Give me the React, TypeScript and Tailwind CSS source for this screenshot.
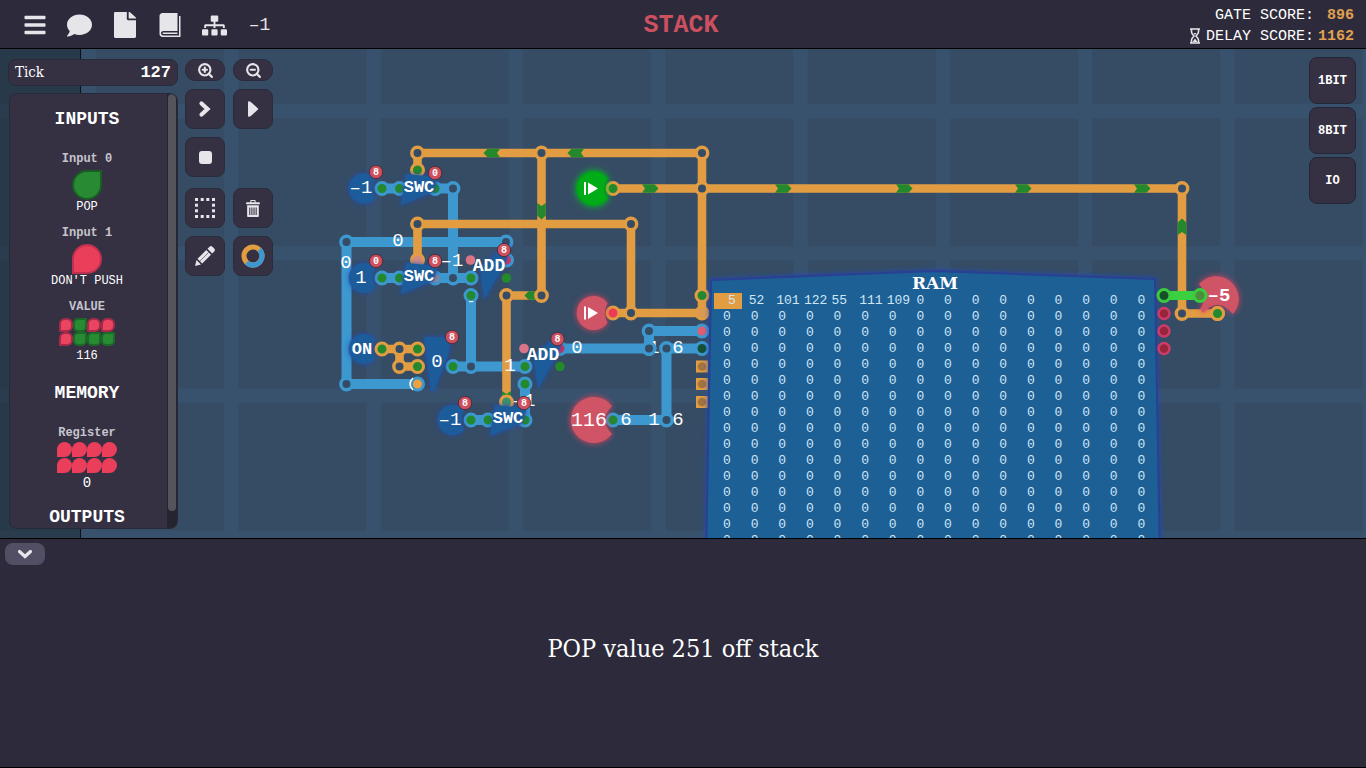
import React from "react";
import { FaBars, FaComment, FaFile, FaSitemap } from "react-icons/fa";
import { ImBook, ImBin } from "react-icons/im";
import { ZoomIn, ZoomOut } from "lucide-react";

const ORANGE = "#e29d43";
const BLUE = "#3c98cf";
const BOARD = "#354c64";
const GREEN = "#24882d";

type Point = [number, number];

const orangeWires = [
  "M417.5 170V153H702V313",
  "M541.5 153V295.5H506.5V402",
  "M613 188.5H1182V313.5H1217",
  "M417.5 260V224H631V313",
  "M613 313H702",
  "M382 349H417.5",
  "M399.5 349V366.5H417.5",
];

const blueWires = [
  "M382 188.5H453V278",
  "M382 278H471",
  "M506 242H346.5V384H417.5",
  "M471 295.5V366.5",
  "M453 366.5H525",
  "M525 384V420",
  "M471 420H490",
  "M560 348.5H649V331H702",
  "M613 420H666.5V348.5H702",
];

const orangeJoints: Point[] = [
  [417.5, 153], [541.5, 153], [702, 153], [702, 188.5], [1182, 188.5], [417.5, 224],
  [631, 224], [631, 313], [541.5, 295.5], [506.5, 295.5], [1182, 313.5], [399.5, 349], [399.5, 366.5],
];

const blueJoints: Point[] = [
  [453, 188.5], [453, 278], [346.5, 242], [506, 242], [346.5, 384], [471, 366.5],
  [649, 331], [649, 348.5], [666.5, 348.5], [666.5, 420],
];

const orangePins: [number, number, string][] = [
  [613, 188.5, GREEN], [702, 295.5, GREEN], [613, 313, "#ec3b57"],
  [702, 313, "#d89a55"], [382, 349, GREEN], [417.5, 349, GREEN], [417.5, 366.5, GREEN],
  [1217.5, 313.5, GREEN],
];

const coveredPins: [number, number, string][] = [
  [417.5, 170, GREEN], [506.5, 402, "#3f8f6a"], [417.5, 260, "#d68a86"],
];

const bluePins: [number, number, string][] = [
  [382, 188.5, GREEN], [399.5, 188.5, GREEN], [435, 188.5, GREEN], [382, 278, GREEN],
  [399.5, 278, GREEN], [435, 278, "#8f8795"], [471, 278, GREEN], [471, 295.5, GREEN],
  [453, 366.5, GREEN], [525, 366.5, GREEN], [525, 384, GREEN], [525, 420, GREEN],
  [471, 420, GREEN], [488, 420, GREEN], [613, 420, GREEN], [702, 331, "#dd6070"],
  [702, 348.5, "#155034"], [417.5, 384, "#f0a03c"], [506.5, 260, "#dc3560"], [560, 348.5, "#c23564"],
];

const arrows: [number, number, number][] = [
  [492, 153, 180], [576, 153, 180], [541.5, 211, 90], [650, 188.5, 0], [783, 188.5, 0],
  [904, 188.5, 0], [1023, 188.5, 0], [1142, 188.5, 0], [1182, 227, 270], [533, 295.5, 180],
];

const badges: [number, number, string][] = [
  [376, 172, "8"], [435, 173, "0"], [376, 261, "0"], [435, 261, "8"], [504, 250, "8"],
  [452, 337, "8"], [557.5, 339, "8"], [465, 403, "8"], [524, 403, "8"],
];

function Joint({ at, color }: { at: Point; color: string }) {
  return <circle cx={at[0]} cy={at[1]} r="5.7" fill={BOARD} stroke={color} strokeWidth="3.4" />;
}

function Pin({ x, y, ring, fill }: { x: number; y: number; ring: string; fill: string }) {
  return <circle cx={x} cy={y} r="6" fill={fill} stroke={ring} strokeWidth="3" />;
}

function Label({ x, y, size = 19, bold = false, children }: { x: number; y: number; size?: number; bold?: boolean; children: string }) {
  return (
    <text x={x} y={y} fontSize={size} fontWeight={bold ? 700 : 400} textAnchor="middle" dominantBaseline="central" fill="#fff">
      {children}
    </text>
  );
}

function Circuit() {
  return (
    <svg className="absolute inset-0 h-full w-full font-['Liberation_Mono',monospace]" role="img" aria-label="Circuit board">
      <defs>
        <pattern id="grid" x="82" y="104" width="142.3" height="142.3" patternUnits="userSpaceOnUse">
          <rect width="142.3" height="142.3" fill={BOARD} />
          <rect width="14" height="142.3" fill="#38526e" />
          <rect width="142.3" height="14" fill="#38526e" />
        </pattern>
        <filter id="blueGlow" x="-40%" y="-40%" width="180%" height="180%">
          <feDropShadow dx="0" dy="0" stdDeviation="2.5" floodColor="#2448b8" />
        </filter>
        <filter id="redGlow" x="-40%" y="-40%" width="180%" height="180%">
          <feDropShadow dx="0" dy="0" stdDeviation="3" floodColor="#e0405c" />
        </filter>
        <filter id="greenGlow" x="-40%" y="-40%" width="180%" height="180%">
          <feDropShadow dx="0" dy="0" stdDeviation="3.5" floodColor="#08c020" />
        </filter>
      </defs>
      <g transform="translate(0 -49)">
        <rect y="49" width="100%" height="100%" fill="url(#grid)" />
        <rect y="49" width="80" height="100%" fill="#1d2c35" fillOpacity="0.55" />
        <rect x="80" y="49" width="1" height="100%" fill="#0c1118" />

        <g fill="none" stroke={BLUE} strokeWidth="10">
          {blueWires.map((d) => <path key={d} d={d} />)}
        </g>
        {blueJoints.map((p) => <Joint key={p.join()} at={p} color={BLUE} />)}

        <g fill="none" stroke={ORANGE} strokeWidth="8.6">
          {orangeWires.map((d) => <path key={d} d={d} />)}
        </g>
        {arrows.map(([x, y, turn]) => (
          <path key={`${x},${y}`} transform={`translate(${x} ${y}) rotate(${turn})`} d="M-8-4.3H4.500L8.500 0L4.500 4.3H-8L-5 0Z" fill={GREEN} />
        ))}
        {orangeJoints.map((p) => <Joint key={p.join()} at={p} color={ORANGE} />)}
        <path d="M502 391l4.500 3 4.500-3v4l-4.500 3-4.500-3Z" fill={GREEN} />

        {bluePins.map(([x, y, fill]) => <Pin key={`${x},${y}`} x={x} y={y} ring={BLUE} fill={fill} />)}
        {coveredPins.map(([x, y, fill]) => <Pin key={`${x},${y}`} x={x} y={y} ring={ORANGE} fill={fill} />)}
        {[366.5, 384, 402].map((y) => (
          <g key={y}>
            <rect x="696" y={y - 6} width="12" height="12" fill={ORANGE} />
            <circle cx="702" cy={y} r="4.3" fill="#a37440" />
          </g>
        ))}

        <g fill="#1c5b9b" filter="url(#blueGlow)">
          <path d="M375 178.500A15 15 0 1 0 375 198.500Q370 188.500 375 178.500Z" />
          <path d="M375 268A15 15 0 1 0 375 288Q370 278 375 268Z" />
          <path d="M375 339A15 15 0 1 0 375 359Q370 349 375 339Z" />
          <path d="M464 410A15 15 0 1 0 464 430Q459 420 464 410Z" />
          <path d="M401 205L406 174L438 177L433 192Z" />
          <path d="M401 294L406 263L438 266L433 281Z" />
          <path d="M490 436L495 405L527 408L522 423Z" />
          <path d="M484 300L480 267L509 243L506 262Z" />
          <path d="M538 389L533 356L562 332L559 351Z" />
          <path d="M424 337H451L448 356L434 391H431L427 362Z" />
        </g>
        {orangePins.map(([x, y, fill]) => <Pin key={`${x},${y}`} x={x} y={y} ring={ORANGE} fill={fill} />)}
        <circle cx="470.500" cy="260" r="4.800" fill="#dc7487" />
        <circle cx="524" cy="348.500" r="4.800" fill="#dc7487" />
        <circle cx="506.500" cy="278" r="4.800" fill={GREEN} />
        <circle cx="560" cy="366.500" r="4.800" fill={GREEN} />

        <path d="M607.500 178.500A17 17 0 1 0 607.500 198.500Q602 188.500 607.500 178.500Z" fill="#00ad18" stroke="#079a20" strokeWidth="1.500" filter="url(#greenGlow)" />
        <path d="M607.500 303A17 17 0 1 0 607.500 323Q602 313 607.500 303Z" fill="#cf5566" filter="url(#redGlow)" />
        <path d="M585 182v13M585 306.500v13" stroke="#fff" strokeWidth="2" />
        <path d="M588 182.500L598 188.500L588 194.500ZM588 307L598 313L588 319Z" fill="#fff" />
        <path d="M612 406A23 23 0 1 0 612 434Q598 420 612 406Z" fill="#cf5566" filter="url(#redGlow)" />
        <path d="M1199 284A21.800 21.800 0 1 1 1233 314Q1218 296 1203 313L1200 309Q1210 296 1199 284Z" fill="#cf5566" filter="url(#redGlow)" />
        <Pin x={1217.5} y={313.5} ring={ORANGE} fill={GREEN} />

        <path d="M711 280L934 271L1155 279L1160 560L1180 1400H690L706 560Z" fill="#1c6095" stroke="#293f92" strokeWidth="2" filter="url(#blueGlow)" />

        <path d="M1164 295.500H1200" stroke="#3ad03f" strokeWidth="9" />
        <Pin x={1164} y={295.5} ring="#3bcb3f" fill="#164f29" />
        <Pin x={1200} y={295.5} ring="#3bcb3f" fill="#4e8d3c" />
        {[313.5, 331, 348.5].map((y) => <circle key={y} cx="1164" cy={y} r="5.500" fill="#97263b" stroke="#cc3b69" strokeWidth="2.500" />)}

        <Label x={361} y={188}>–1</Label>
        <Label x={361} y={278}>1</Label>
        <Label x={362} y={349} size={17} bold>ON</Label>
        <Label x={450} y={420}>–1</Label>
        <Label x={419} y={187} size={17} bold>SWC</Label>
        <Label x={419} y={276} size={17} bold>SWC</Label>
        <Label x={508} y={418} size={17} bold>SWC</Label>
        <Label x={489} y={266} size={18} bold>ADD</Label>
        <Label x={543} y={355} size={18} bold>ADD</Label>
        <Label x={398} y={241}>0</Label>
        <Label x={346} y={263}>0</Label>
        <Label x={452} y={261}>–1</Label>
        <Label x={437} y={362}>0</Label>
        <Label x={471} y={302} size={14}>-</Label>
        <Label x={510} y={366}>1</Label>
        <Label x={524} y={401}>–1</Label>
        <Label x={577} y={348}>0</Label>
        <Label x={654} y={348}>1</Label>
        <Label x={678} y={348}>6</Label>
        <Label x={589} y={420} size={20}>116</Label>
        <Label x={626} y={420}>6</Label>
        <Label x={654} y={420}>1</Label>
        <Label x={678} y={420}>6</Label>
        <Label x={1219} y={296} bold>–5</Label>
        <path d="M413 378Q407 384 413 390" fill="none" stroke="#fff" strokeWidth="1.500" />
        <Joint at={[649, 348.5]} color={BLUE} />

        {badges.map(([x, y, value]) => (
          <g key={`${x},${y}`}>
            <circle cx={x} cy={y} r="6.700" fill="#ce505e" stroke="#42252f" strokeWidth="0.800" />
            <Label x={x} y={y} size={10} bold>{value}</Label>
          </g>
        ))}
      </g>
    </svg>
  );
}

const stackValues = [5, 52, 101, 122, 55, 111, 109, 0, 0, 0, 0, 0, 0, 0, 0, 0];
const ramRows: number[][] = [stackValues, ...Array.from({ length: 15 }, () => Array<number>(16).fill(0))];

function RamContents() {
  return (
    <table className="absolute top-[224px] left-[714px] w-[442px] table-fixed border-collapse font-['Liberation_Mono',monospace] text-[13px] text-[#cfe6f5]">
      <caption className="h-[20px] text-center font-['DejaVu_Serif',serif] text-[17px] leading-[20px] font-bold text-white">RAM</caption>
      <tbody>
        {ramRows.map((row, r) => (
          <tr key={r} className="h-[16px] leading-[14px]">
            {row.map((value, c) => (
              <td
                key={c}
                className={
                  r === 0 && c === 0
                    ? "bg-[#e29d43] p-0 pl-[14px]"
                    : value === 0
                      ? "p-0 pl-[9px]"
                      : "p-0 pl-[7px]"
                }
              >
                {value}
              </td>
            ))}
          </tr>
        ))}
      </tbody>
    </table>
  );
}

function Bulb({ on }: { on: boolean }) {
  return (
    <span
      className={
        on
          ? "size-[30px] rounded-full rounded-tr-[2px] border-2 border-[#195f24] bg-[#288a33]"
          : "size-[30px] rounded-full rounded-bl-[2px] border-2 border-[#c03050] bg-[#ea3e5b]"
      }
    />
  );
}

function Bits({ bits, outlined }: { bits: string; outlined: boolean }) {
  return (
    <span className={outlined ? "grid grid-cols-4" : "grid grid-cols-4 gap-y-px"}>
      {bits.split("").map((bit, i) => (
        <span
          key={i}
          className={
            bit === "1"
              ? "size-[14px] rounded-[5px] rounded-tr-[1px] border-2 border-[#1b6a28] bg-[#288a33]"
              : outlined
                ? "size-[14px] rounded-[6px] rounded-bl-[1px] border-2 border-[#a52b48] bg-[#ea4460]"
                : "size-[15px] rounded-full rounded-bl-[1px] bg-[#ea3e5b]"
          }
        />
      ))}
    </span>
  );
}

function StatePanel() {
  return (
    <section className="ml-px flex min-h-0 flex-1 overflow-hidden rounded-lg border border-[#262a3a] bg-[#353143] font-['Liberation_Mono',monospace] text-[12px] text-white">
      <div className="flex min-w-0 flex-1 flex-col items-center overflow-hidden pt-[11px] pr-[3px] *:shrink-0">
        <h2 className="text-[18px] leading-[28px] font-bold">INPUTS</h2>
        <h3 className="mt-[18px] leading-[16px] font-bold text-[#c6c4cd]">Input 0</h3>
        <div className="mt-[3px] flex flex-col items-center"><Bulb on /><span className="leading-[14px]">POP</span></div>
        <h3 className="mt-[11px] leading-[16px] font-bold text-[#c6c4cd]">Input 1</h3>
        <div className="mt-[3px] flex flex-col items-center"><Bulb on={false} /><span className="leading-[14px]">DON'T PUSH</span></div>
        <h3 className="mt-[11px] leading-[16px] font-bold text-[#c6c4cd]">VALUE</h3>
        <div className="mt-[3px] flex flex-col items-center gap-[3px]"><Bits bits="01000111" outlined /><span className="leading-[14px]">116</span></div>
        <h2 className="mt-[16px] text-[18px] leading-[28px] font-bold">MEMORY</h2>
        <h3 className="mt-[18px] leading-[16px] font-bold text-[#c6c4cd]">Register</h3>
        <div className="mt-px flex flex-col items-center gap-[3px]"><Bits bits="00000000" outlined={false} /><span className="text-[14px] leading-[14px]">0</span></div>
        <h2 className="mt-[13px] text-[18px] leading-[28px] font-bold">OUTPUTS</h2>
      </div>
      <div className="w-[10px] bg-[#26242f] px-px">
        <div className="h-[96%] rounded-full bg-[#55535c]" />
      </div>
    </section>
  );
}

function Tool({ label, small = false, spaced = false, children }: { label: string; small?: boolean; spaced?: boolean; children: React.ReactNode }) {
  return (
    <button
      aria-label={label}
      className={
        "flex w-10 items-center justify-center border border-[#2a2c3e] bg-[#353143] text-[#e6e5ea] " +
        (small ? "h-[22px] rounded-[10px]" : spaced ? "mt-[3px] h-10 rounded-lg" : "h-10 rounded-lg")
      }
    >
      {children}
    </button>
  );
}

function Toolbar() {
  return (
    <div className="grid grid-cols-2 content-start gap-2">
      <Tool small label="Zoom in"><ZoomIn size={17} strokeWidth={3} /></Tool>
      <Tool small label="Zoom out"><ZoomOut size={17} strokeWidth={3} /></Tool>
      <Tool label="Step">
        <svg width="14" height="18" viewBox="0 0 14 18" fill="none" stroke="currentColor" strokeWidth="4.200" strokeLinecap="round"><path d="M3.500 3.500L9.500 9L3.500 14.500" /></svg>
      </Tool>
      <Tool label="Run">
        <svg width="12" height="18" viewBox="0 0 12 18" fill="currentColor"><path d="M1 2.500Q1 .5 3 1.500L5 3L11 8.500Q11.600 9 11 9.500L5 15L3 16.500Q1 17.500 1 15.500Z" /></svg>
      </Tool>
      <Tool label="Stop"><span className="size-[13px] rounded-[3px] bg-current" /></Tool>
      <span />
      <Tool spaced label="Select area">
        <svg width="20" height="20" viewBox="0 0 20 20" fill="currentColor">
          {[0, 5.7, 11.3, 17].map((n) => (
            <g key={n}>
              <rect x={n} width="3" height="3" />
              <rect x={n} y="17" width="3" height="3" />
              <rect y={n} width="3" height="3" />
              <rect x="17" y={n} width="3" height="3" />
            </g>
          ))}
        </svg>
      </Tool>
      <Tool spaced label="Delete"><ImBin size={17} /></Tool>
      <Tool label="Draw">
        <svg width="22" height="22" viewBox="0 0 22 22" fill="currentColor">
          <path d="M1 21L2.500 15L7 19.500ZM3.500 13.800L12.300 5L17 9.700L8.200 18.500ZM13.500 3.800L15.800 1.500Q17 .6 18.200 1.600L20.400 3.800Q21.400 5 20.500 6.200L18.200 8.500Z" />
          <path d="M5.800 16.200L14.600 7.400" stroke="#353143" strokeWidth="0.600" />
        </svg>
      </Tool>
      <Tool label="Wire color">
        <svg width="24" height="24" viewBox="0 0 24 24" fill="none" strokeWidth="5">
          <circle cx="12" cy="12" r="9" stroke={ORANGE} />
          <path d="M18.400 5.600A9 9 0 0 1 5.600 18.400" stroke={BLUE} />
        </svg>
      </Tool>
    </div>
  );
}

function HeaderButton({ label, children }: { label: string; children: React.ReactNode }) {
  return <button aria-label={label} className="flex h-12 w-[45px] items-center justify-center pt-[2px]">{children}</button>;
}

function Hourglass() {
  return (
    <svg width="10" height="16" viewBox="0 0 10 16" fill="none" stroke="#e6e5ea" strokeWidth="1.600">
      <path d="M0 1H10M0 15H10M1.500 1V4Q1.500 5.500 4 8Q1.500 10.500 1.500 12V15M8.500 1V4Q8.500 5.500 6 8Q8.500 10.500 8.500 12V15" />
      <path d="M2.500 14L5 10.500L7.500 14ZM3.500 5H6.500L5 7Z" fill="#e6e5ea" stroke="none" />
    </svg>
  );
}

export default function App() {
  return (
    <div className="flex h-screen flex-col overflow-hidden bg-[#2d2b3b] text-white">
      <header className="grid h-[49px] shrink-0 grid-cols-[1fr_auto_1fr] items-center border-b border-black font-['Liberation_Mono',monospace]">
        <nav className="flex items-center pl-3 text-[#e6e5ea]">
          <HeaderButton label="Menu"><FaBars size={24} /></HeaderButton>
          <HeaderButton label="Comments"><FaComment size={25} /></HeaderButton>
          <HeaderButton label="Files"><FaFile size={25} className="h-[26px] w-[22px]" preserveAspectRatio="none" /></HeaderButton>
          <HeaderButton label="Manual"><ImBook size={24} /></HeaderButton>
          <HeaderButton label="Hierarchy"><FaSitemap size={25} /></HeaderButton>
          <HeaderButton label="Selected value"><span className="text-[18px]">–1</span></HeaderButton>
        </nav>
        <h1 className="pt-1 pr-1 text-[25px] leading-[32px] font-bold text-[#cc5060]">STACK</h1>
        <dl className="grid grid-cols-[auto_38px] justify-end gap-x-[2px] pt-[3px] pr-3 text-[15px] leading-[21px]">
          <dt className="text-right">GATE SCORE:</dt>
          <dd className="text-right font-bold text-[#e0a050]">896</dd>
          <dt className="flex items-center gap-[6px]"><Hourglass />DELAY SCORE:</dt>
          <dd className="text-right font-bold text-[#e0a050]">1162</dd>
        </dl>
      </header>

      <main className="relative min-h-0 flex-1 overflow-hidden">
        <Circuit />
        <RamContents />
        <div className="relative flex h-full items-stretch gap-[7px] pt-[10px] pr-[10px] pb-[9px] pl-2">
          <aside className="flex w-[170px] flex-col gap-[7px]">
            <div className="flex h-[27px] shrink-0 items-center justify-between rounded-lg border border-[#262a3a] bg-[#353143] px-[6px]">
              <span className="font-['DejaVu_Serif_Condensed','DejaVu_Serif',serif] text-[15px]">Tick</span>
              <span className="font-['Liberation_Mono',monospace] text-[17px] font-bold">127</span>
            </div>
            <StatePanel />
          </aside>
          <Toolbar />
          <div className="-mt-[2px] ml-auto flex flex-col gap-[3px]">
            {["1BIT", "8BIT", "IO"].map((name) => (
              <button key={name} className="size-[47px] rounded-lg border border-[#232637] bg-[#353143] font-['Liberation_Mono',monospace] text-[12px] font-bold">
                {name}
              </button>
            ))}
          </div>
        </div>
      </main>

      <footer className="flex h-[230px] shrink-0 flex-col border-y border-black">
        <button aria-label="Collapse" className="mt-1 ml-[5px] flex h-[22px] w-10 items-center justify-center rounded-lg bg-[#524f65] text-[#e6e5ea]">
          <svg width="16" height="12" viewBox="0 0 16 12" fill="none" stroke="currentColor" strokeWidth="3.200" strokeLinecap="round"><path d="M2.500 3.500L8 8.500L13.500 3.500" /></svg>
        </button>
        <p className="mt-[66px] text-center font-['DejaVu_Serif_Condensed','DejaVu_Serif',serif] text-[25px] leading-[36px]">POP value 251 off stack</p>
      </footer>
    </div>
  );
}
